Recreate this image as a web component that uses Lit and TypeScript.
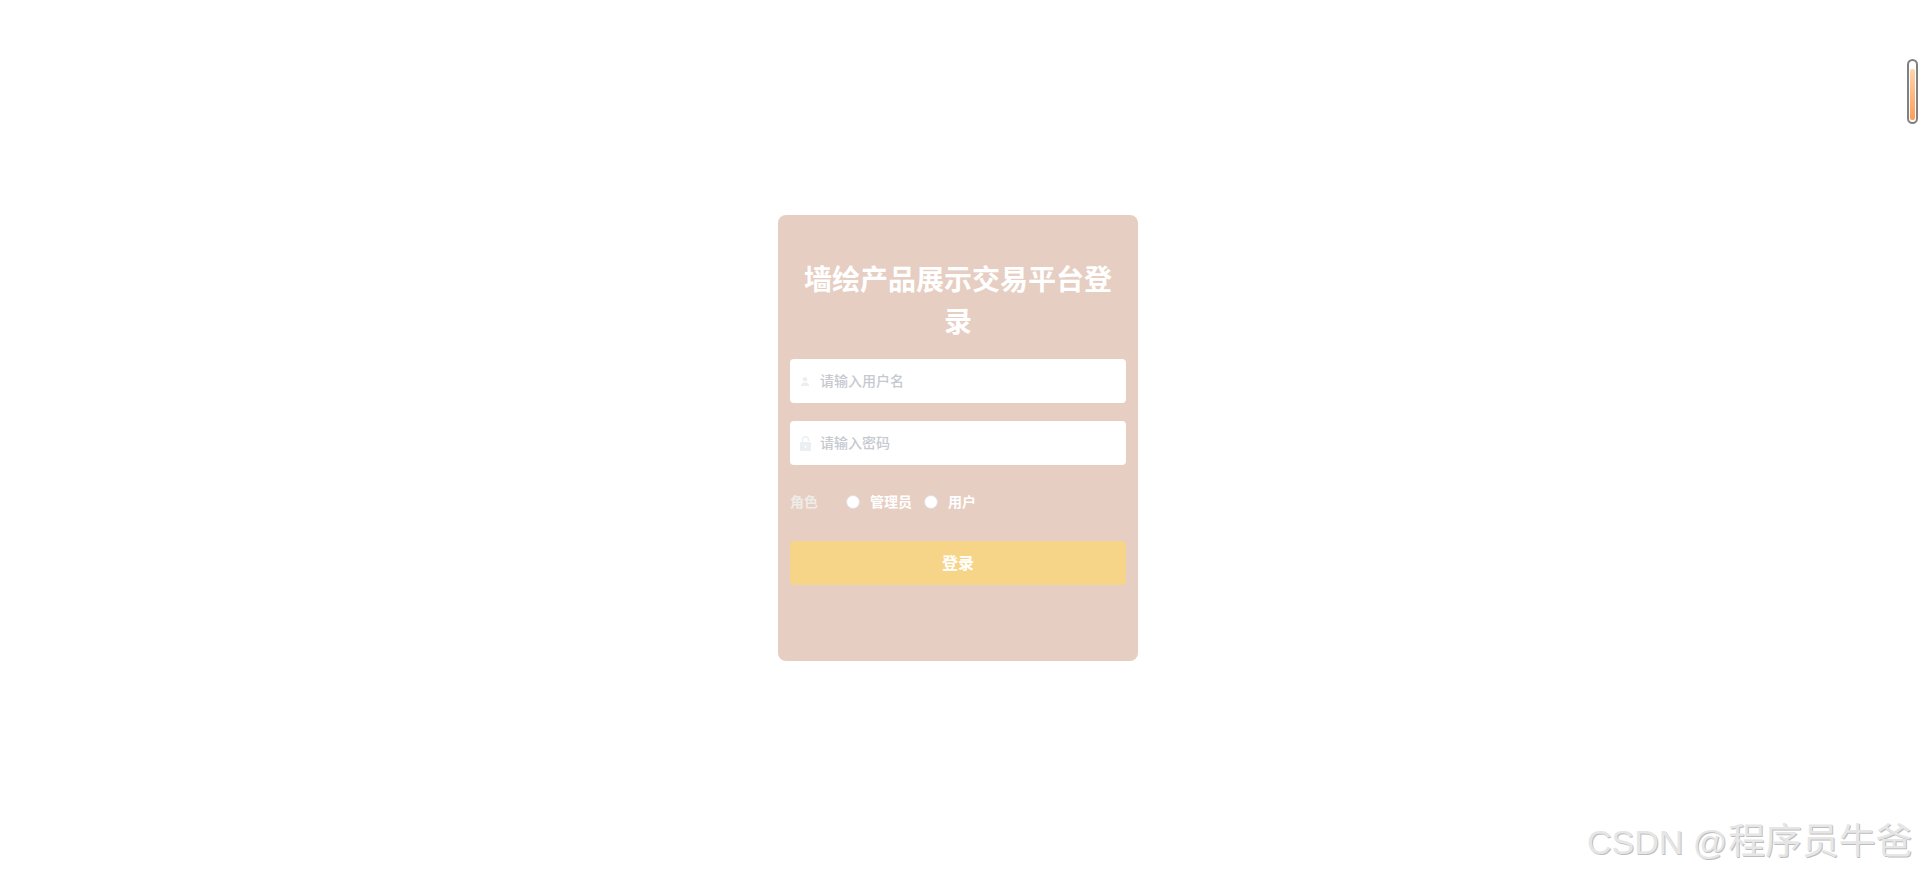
import { LitElement, html, css } from "lit";
import { customElement } from "lit/decorators.js";

@customElement("app-root")
export class AppRoot extends LitElement {
  static styles = css`
    :host {
      display: block;
      height: 875px;
      background: #fff;
      font-family: "Liberation Sans", "Noto Sans CJK SC", sans-serif;
      position: relative;
      overflow: hidden;
    }
    .page {
      height: 875px;
      width: 1916px;
      display: flex;
      align-items: flex-start;
      justify-content: center;
      padding-top: 215px;
      box-sizing: border-box;
    }
    .card {
      width: 360px;
      height: 446px;
      box-sizing: border-box;
      padding: 45px 12px 0;
      background: #e7cec2;
      border-radius: 8px;
      display: flex;
      flex-direction: column;
    }
    h1 {
      margin: 0 0 15px;
      padding: 0 12px;
      color: #fff;
      font-size: 28px;
      font-weight: 700;
      line-height: 42px;
      text-align: center;
    }
    .field {
      height: 44px;
      background: #fff;
      border-radius: 4px;
      display: flex;
      align-items: center;
      margin-bottom: 18px;
    }
    .ico {
      width: 30px;
      flex: none;
      display: flex;
      justify-content: center;
      box-sizing: border-box;
    }
    input {
      flex: 1;
      min-width: 0;
      border: 0;
      outline: 0;
      padding: 0;
      background: transparent;
      font: 500 14px "Liberation Sans", "Noto Sans CJK SC", sans-serif;
    }
    input::placeholder {
      color: #c6c9d0;
      opacity: 1;
    }
    .role {
      display: flex;
      align-items: center;
      height: 20px;
      margin-top: 9px;
      font-size: 14px;
      font-weight: 700;
      color: #fff;
    }
    .role-label,
    .opt {
      padding-bottom: 2px;
    }
    .role-label {
      width: 56px;
      color: #efebe8;
    }
    .radio {
      width: 14px;
      height: 14px;
      box-sizing: border-box;
      border-radius: 50%;
      background: #fff;
      border: 1px solid #dcdfe6;
      margin-right: 10px;
    }
    .gap {
      margin-right: 12px;
    }
    button {
      margin-top: 29px;
      height: 44px;
      border: 0;
      border-radius: 4px;
      background: #f6d488;
      color: #fff;
      font: 700 16px "Liberation Sans", "Noto Sans CJK SC", sans-serif;
      padding: 0 0 2px;
    }
    .thermo {
      position: absolute;
      left: 1907px;
      top: 59px;
      width: 11px;
      height: 65px;
      box-sizing: border-box;
      border: 2.5px solid #808080;
      border-radius: 5.5px;
      background: #fff;
      padding: 8px 1px 2px;
    }
    .thermo i {
      display: block;
      height: 100%;
      background: linear-gradient(#ffd5ac, #ff9c56);
      border-radius: 2px;
    }
    .mark {
      position: absolute;
      left: 1587px;
      top: 820px;
      white-space: nowrap;
      font-size: 34px;
      line-height: 44px;
      color: #e6e6e6;
      text-shadow: 1px 1px 0 #bdbdbd;
    }
    .mark span {
      font-size: 36.8px;
      margin-left: 1px;
    }
  `;

  render() {
    return html`
      <div class="page">
        <div class="card">
          <h1>墙绘产品展示交易平台登录</h1>
          <div class="field">
            <span class="ico">
              <svg width="8" height="9" viewBox="0 0 8 9">
                <circle cx="4" cy="2.3" r="2.3" fill="#eceff1" />
                <path d="M0 9C0 6.2 1.6 5.4 4 5.4s4 .8 4 3.6z" fill="#eceff1" />
              </svg>
            </span>
            <input placeholder="请输入用户名" />
          </div>
          <div class="field">
            <span class="ico">
              <svg width="11" height="15" viewBox="0 0 11 15">
                <path d="M2.5 7V3.8a3 3 0 0 1 6 0V5" fill="none" stroke="#eceff1" stroke-width="1.5" />
                <rect x="0" y="6" width="11" height="9" rx="1" fill="#eceff1" />
                <rect x="4.8" y="9.5" width="1.4" height="2.5" fill="#fff" />
              </svg>
            </span>
            <input placeholder="请输入密码" />
          </div>
          <div class="role">
            <span class="role-label">角色</span>
            <span class="radio"></span>
            <span class="opt gap">管理员</span>
            <span class="radio"></span>
            <span class="opt">用户</span>
          </div>
          <button>登录</button>
        </div>
      </div>
      <div class="thermo"><i></i></div>
      <div class="mark">CSDN @<span>程序员牛爸</span></div>
    `;
  }
}
